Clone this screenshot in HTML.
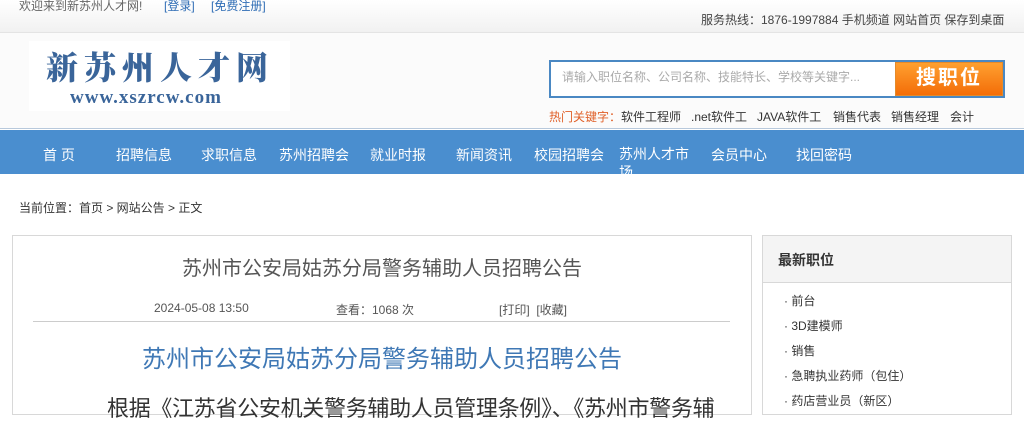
<!DOCTYPE html>
<html><head><meta charset="utf-8"><style>
*{margin:0;padding:0;box-sizing:border-box}
body{width:1024px;height:400px;overflow:hidden;background:#fff;font-family:"Liberation Sans","Noto Sans CJK SC",sans-serif;font-size:12px;color:#333;position:relative}
.a{position:absolute;white-space:nowrap}
</style></head><body>
<div class="a" style="left:0;top:0;width:1024px;height:33px;background:linear-gradient(#fff,#f1f1f1);border-bottom:1px solid #e4e4e4"></div>
<div class="a" style="left:19px;top:-3px;color:#666">欢迎来到新苏州人才网!</div>
<div class="a" style="left:164px;top:-3px;color:#2f6db5">[登录]</div>
<div class="a" style="left:211px;top:-3px;color:#2f6db5">[免费注册]</div>
<div class="a" style="left:701px;top:11px;color:#444">服务热线：1876-1997884 手机频道 网站首页 保存到桌面</div>
<div class="a" style="left:0;top:33px;width:1024px;height:96px;background:#fbfbfb;border-bottom:1px solid #b8c9dc"></div>
<div class="a" style="left:29px;top:41px;width:261px;height:70px;background:#fff"></div>
<div class="a" style="left:46px;top:46px;font-family:'Noto Serif CJK SC',serif;font-weight:900;font-size:32px;line-height:40px;letter-spacing:6px;color:#3a659a">新苏州人才网</div>
<div class="a" style="left:70px;top:88px;font-family:'Liberation Serif',serif;font-weight:bold;font-size:19px;line-height:20px;color:#3a659a;letter-spacing:1px">www.xszrcw.com</div>
<div class="a" style="left:549px;top:60px;width:456px;height:38px;border:2px solid #4a88c3;background:#fff"></div>
<div class="a" style="left:562px;top:68px;color:#aaa">请输入职位名称、公司名称、技能特长、学校等关键字...</div>
<div class="a" style="left:895px;top:62px;width:108px;height:34px;background:linear-gradient(#ffa030,#f36d08);border:1px solid #e58a2a;color:#fff;font-size:20px;font-weight:bold;text-align:center;line-height:30px;letter-spacing:2px">搜职位</div>
<div class="a" style="left:549px;top:108px;color:#e0612a">热门关键字：</div>
<div class="a" style="left:621px;top:108px;color:#333">软件工程师</div>
<div class="a" style="left:691px;top:108px;color:#333">.net软件工</div>
<div class="a" style="left:757px;top:108px;color:#333">JAVA软件工</div>
<div class="a" style="left:833px;top:108px;color:#333">销售代表</div>
<div class="a" style="left:891px;top:108px;color:#333">销售经理</div>
<div class="a" style="left:950px;top:108px;color:#333">会计</div>
<div class="a" style="left:0;top:130px;width:1024px;height:44px;background:#4a8ecf"></div>
<div class="a" style="top:145px;left:0;width:1024px;color:#fff;font-size:14px;height:29px;overflow:hidden">
<span class="a" style="left:43px">首 页</span><span class="a" style="left:116px">招聘信息</span><span class="a" style="left:201px">求职信息</span><span class="a" style="left:279px">苏州招聘会</span><span class="a" style="left:370px">就业时报</span><span class="a" style="left:456px">新闻资讯</span><span class="a" style="left:534px">校园招聘会</span><span class="a" style="left:619px;white-space:normal;width:72px;line-height:18px">苏州人才市场</span><span class="a" style="left:711px">会员中心</span><span class="a" style="left:796px">找回密码</span></div>
<div class="a" style="left:19px;top:199px;color:#333">当前位置：首页 &gt; 网站公告 &gt; 正文</div>
<div class="a" style="left:12px;top:235px;width:740px;height:180px;border:1px solid #d8d8d8"></div>
<div class="a" style="left:12px;top:252px;width:740px;text-align:center;font-size:20px;color:#555">苏州市公安局姑苏分局警务辅助人员招聘公告</div>
<div class="a" style="left:154px;top:301px;color:#555">2024-05-08 13:50</div>
<div class="a" style="left:336px;top:301px;color:#555">查看：1068 次</div>
<div class="a" style="left:499px;top:301px;color:#555">[打印] &nbsp;[收藏]</div>
<div class="a" style="left:33px;top:321px;width:697px;height:1px;background:#ccc"></div>
<div class="a" style="left:12px;top:339px;width:740px;text-align:center;font-size:24px;color:#3f78b5">苏州市公安局姑苏分局警务辅助人员招聘公告</div>
<div class="a" style="left:107px;top:391px;font-size:22px;color:#333;letter-spacing:-0.3px">根据《江苏省公安机关警务辅助人员管理条例》、《苏州市警务辅</div>
<div class="a" style="left:762px;top:235px;width:250px;height:180px;border:1px solid #d8d8d8"></div>
<div class="a" style="left:763px;top:236px;width:248px;height:47px;background:#f4f4f4;border-bottom:1px solid #d8d8d8"></div>
<div class="a" style="left:778px;top:250px;font-size:14px;font-weight:bold;color:#333">最新职位</div>
<div class="a" style="left:784px;top:289px;color:#333;line-height:25px">· 前台<br>· 3D建模师<br>· 销售<br>· 急聘执业药师（包住）<br>· 药店营业员（新区）</div>
</body></html>
